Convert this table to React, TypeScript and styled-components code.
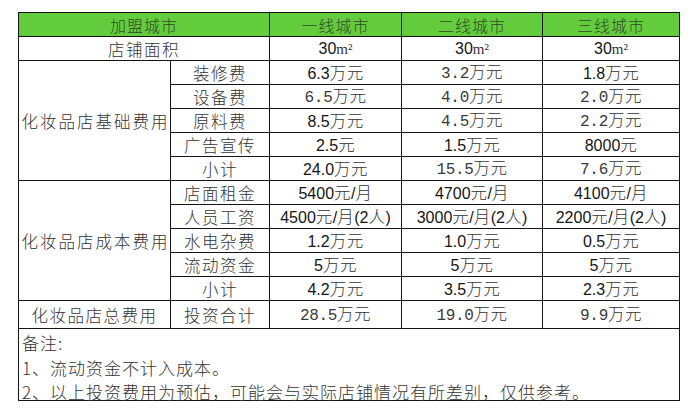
import React from "react";
import styled, { createGlobalStyle, css } from "styled-components";

const GlobalStyle = createGlobalStyle`
  html, body {
    margin: 0;
    padding: 0;
    background: #ffffff;
  }
  body {
    font-family: "Noto Sans CJK SC", sans-serif;
    color: #333;
  }
`;

const Page = styled.div`
  padding: 12px 0 0 18px;
`;

const Grid = styled.div`
  display: grid;
  grid-template-columns: 151px 98px 131px 140px 136px;
  grid-template-rows: 23px 23px repeat(10, 23px) 27px 71px;
  gap: 1px;
  padding: 1px;
  width: max-content;
  background: #141414;
`;

type FontKind = "cjk" | "sans" | "mono";

const fontStacks: Record<FontKind, ReturnType<typeof css>> = {
  cjk: css`
    font-family: "Noto Sans CJK SC", sans-serif;
    font-size: 16.5px;
    font-weight: 300;
    letter-spacing: 1.5px;
  `,
  sans: css`
    font-family: "Liberation Sans", "Noto Sans CJK SC", sans-serif;
    font-size: 16px;
    font-weight: 400;
    color: #151515;
  `,
  mono: css`
    font-family: "Liberation Mono", "Noto Sans CJK SC", monospace;
    font-size: 16px;
    font-weight: 400;
    letter-spacing: -0.3px;
    color: #3a3a3a;
  `,
};

const CellBox = styled.div<{ $span?: number; $rows?: number; $font?: FontKind; $wide?: boolean }>`
  background: #ffffff;
  display: flex;
  align-items: center;
  justify-content: center;
  white-space: nowrap;
  ${(p) => p.$span && css`grid-column: span ${p.$span};`}
  ${(p) => p.$rows && css`grid-row: span ${p.$rows};`}
  ${(p) => fontStacks[p.$font ?? "cjk"]}
  ${(p) => p.$wide && css`letter-spacing: 2px; padding-left: 2px;`}
`;

const HeadBox = styled(CellBox)`
  background: #63cc3c;
  color: #33472b;
  font-size: 16px;
  letter-spacing: 1px;
`;

const Content = styled.span`
  display: block;
  line-height: 20px;
`;

type CellProps = React.ComponentProps<typeof CellBox> & { head?: boolean };

const Cell: React.FC<CellProps> = ({ head, children, ...rest }) => {
  const Box = head ? HeadBox : CellBox;
  return (
    <Box {...rest}>
      <Content>{children}</Content>
    </Box>
  );
};

const Unit = styled.span`
  font-family: "Liberation Serif", serif;
  font-size: 15px;
  color: #333;
`;

const Footer = styled.div`
  grid-column: span 5;
  background: #ffffff;
  padding: 2px 0 0 3px;
  font-family: "Noto Sans CJK SC", sans-serif;
  font-weight: 300;
  font-size: 17px;
  letter-spacing: 1px;
  line-height: 24.5px;
  color: #333;
`;

const Line = styled.div`
  white-space: nowrap;
`;

const CjkTail = styled.span`
  font-family: "Noto Sans CJK SC", sans-serif;
  font-weight: 300;
  font-size: 16.5px;
  letter-spacing: 0.5px;
  color: #333;
`;

type Val = { t: string; f: FontKind };
const S = (t: string): Val => ({ t, f: "sans" });
const M = (t: string): Val => ({ t, f: "mono" });

type Group = { label: string; wide?: boolean; rows: { name: string; vals: Val[] }[] };

const groups: Group[] = [
  {
    label: "化妆品店基础费用",
    wide: true,
    rows: [
      { name: "装修费", vals: [S("6.3万元"), M("3.2万元"), S("1.8万元")] },
      { name: "设备费", vals: [M("6.5万元"), M("4.0万元"), M("2.0万元")] },
      { name: "原料费", vals: [S("8.5万元"), M("4.5万元"), M("2.2万元")] },
      { name: "广告宣传", vals: [S("2.5元"), S("1.5万元"), S("8000元")] },
      { name: "小计", vals: [S("24.0万元"), M("15.5万元"), M("7.6万元")] },
    ],
  },
  {
    label: "化妆品店成本费用",
    wide: true,
    rows: [
      { name: "店面租金", vals: [S("5400元/月"), S("4700元/月"), S("4100元/月")] },
      { name: "人员工资", vals: [S("4500元/月(2人)"), S("3000元/月(2人)"), S("2200元/月(2人)")] },
      { name: "水电杂费", vals: [S("1.2万元"), S("1.0万元"), S("0.5万元")] },
      { name: "流动资金", vals: [S("5万元"), S("5万元"), S("5万元")] },
      { name: "小计", vals: [S("4.2万元"), S("3.5万元"), S("2.3万元")] },
    ],
  },
  {
    label: "化妆品店总费用",
    rows: [{ name: "投资合计", vals: [M("28.5万元"), M("19.0万元"), M("9.9万元")] }],
  },
];

const MixedText: React.FC<{ text: string }> = ({ text }) => {
  const parts = text.split(/([\u4e00-\u9fff]+)/).filter(Boolean);
  return (
    <>
      {parts.map((p, i) =>
        /[\u4e00-\u9fff]/.test(p) ? (
          <CjkTail key={i}>{p}</CjkTail>
        ) : (
          <React.Fragment key={i}>{p}</React.Fragment>
        )
      )}
    </>
  );
};

export default function App() {
  return (
    <>
      <GlobalStyle />
      <Page>
        <Grid>
          <Cell head $span={2}>加盟城市</Cell>
          <Cell head>一线城市</Cell>
          <Cell head>二线城市</Cell>
          <Cell head>三线城市</Cell>

          <Cell $span={2}>店铺面积</Cell>
          {[0, 1, 2].map((i) => (
            <Cell key={i} $font="sans">
              30<Unit>m²</Unit>
            </Cell>
          ))}

          {groups.map((g) => (
            <React.Fragment key={g.label}>
              <Cell $rows={g.rows.length} $wide={g.wide}>
                {g.label}
              </Cell>
              {g.rows.map((r, ri) => (
                <React.Fragment key={ri}>
                  <Cell>{r.name}</Cell>
                  {r.vals.map((v, vi) => (
                    <Cell key={vi} $font={v.f}>
                      <MixedText text={v.t} />
                    </Cell>
                  ))}
                </React.Fragment>
              ))}
            </React.Fragment>
          ))}

          <Footer>
            <Line>备注:</Line>
            <Line>1、流动资金不计入成本。</Line>
            <Line>2、以上投资费用为预估，可能会与实际店铺情况有所差别，仅供参考。</Line>
          </Footer>
        </Grid>
      </Page>
    </>
  );
}
